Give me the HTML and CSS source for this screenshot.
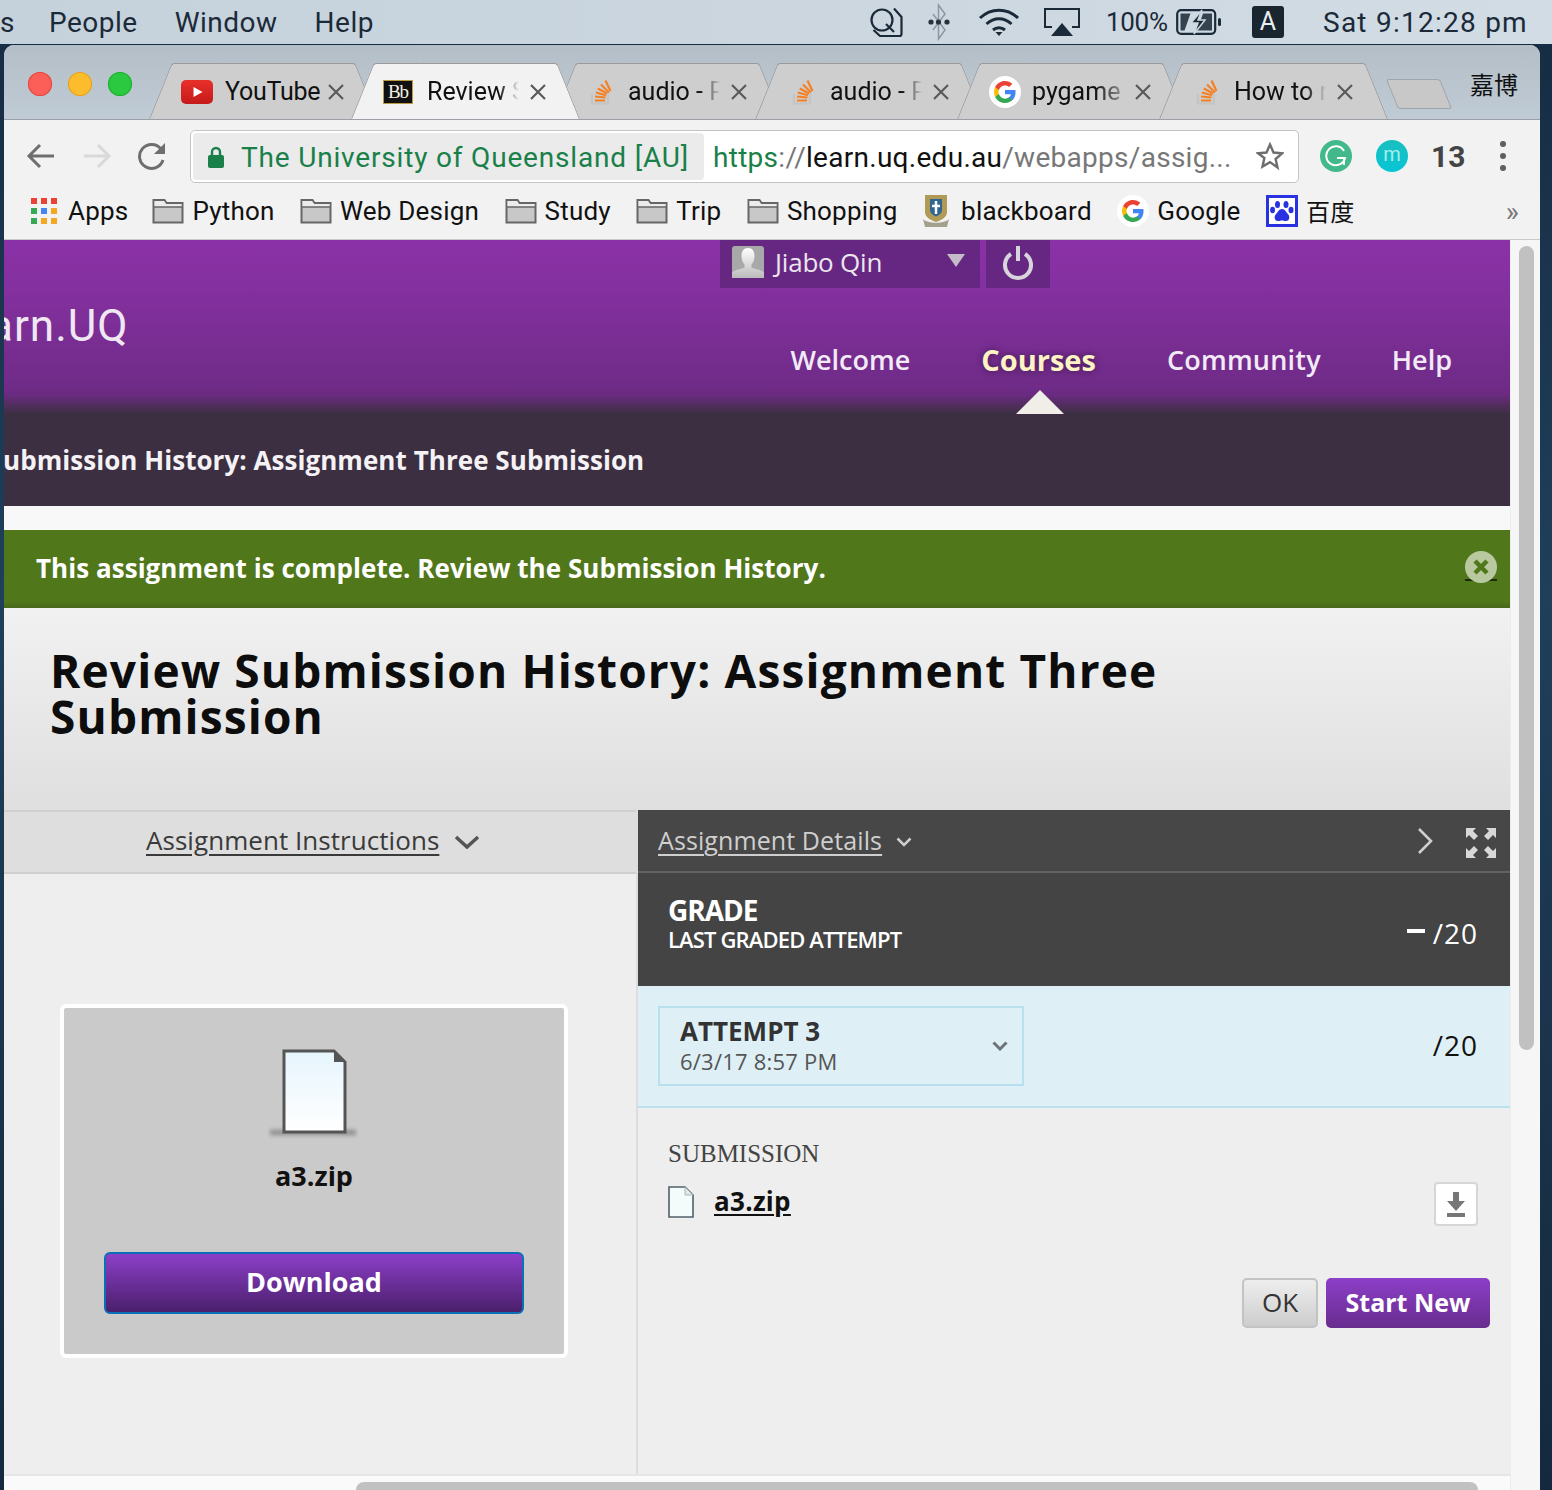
FILE: index.html
```html
<!DOCTYPE html>
<html lang="en">
<head>
<meta charset="utf-8">
<title>Review Submission History</title>
<link rel="stylesheet" href="styles.css">
</head>
<body>
<svg class="defs" width="0" height="0" aria-hidden="true">
  <symbol id="g-logo" viewBox="0 0 24 24">
    <path fill="#4285F4" d="M22.56 12.25c0-.78-.07-1.53-.2-2.25H12v4.26h5.92c-.26 1.37-1.04 2.53-2.21 3.31v2.77h3.57c2.08-1.92 3.28-4.74 3.28-8.09z"/>
    <path fill="#34A853" d="M12 23c2.97 0 5.46-.98 7.28-2.66l-3.57-2.77c-.98.66-2.23 1.06-3.71 1.06-2.86 0-5.29-1.93-6.16-4.53H2.18v2.84C3.99 20.53 7.7 23 12 23z"/>
    <path fill="#FBBC05" d="M5.84 14.09c-.22-.66-.35-1.36-.35-2.09s.13-1.43.35-2.09V7.07H2.18C1.43 8.55 1 10.22 1 12s.43 3.45 1.18 4.93l3.66-2.84z"/>
    <path fill="#EA4335" d="M12 5.38c1.62 0 3.06.56 4.21 1.64l3.15-3.15C17.45 2.09 14.97 1 12 1 7.7 1 3.99 3.47 2.18 7.07l3.66 2.84c.87-2.6 3.3-4.53 6.16-4.53z"/>
  </symbol>
  <symbol id="so" viewBox="0 0 24 26">
    <path d="M2 15v9.500h16V15" fill="none" stroke="#c4c4c4" stroke-width="2.200"/>
    <g fill="none" stroke="#f48024" stroke-width="2.200">
      <path d="M5 21.500h10"/><path d="M5 17.500l10.500 1"/><path d="M5.800 13.500l10.200 2.800"/><path d="M7.800 9.500l9.400 5"/><path d="M11 5.500l8 8"/><path d="M15.500 1.500l5 10.500"/>
    </g>
  </symbol>
  <symbol id="folder" viewBox="0 0 32 26">
    <path d="M1.500 24.500V2h11l2 3h16v19.500z" fill="#c8c8c8" stroke="#666" stroke-width="2"/>
    <path d="M2.500 3h9.500l2 3h15.500v3H2.500z" fill="#ececec"/>
    <path d="M2 9h28" stroke="#666" stroke-width="1.500"/>
  </symbol>
  <symbol id="x-mark" viewBox="0 0 16 16">
    <path d="M1 1l14 14M15 1L1 15" fill="none" stroke="#5a5a5a" stroke-width="2.200"/>
  </symbol>
</svg>

<header class="menubar">
  <div class="menu-left">
    <span class="menu-s">s</span>
    <span>People</span>
    <span>Window</span>
    <span>Help</span>
  </div>
  <div class="menu-right">
    <svg class="mi-search" width="33" height="34" viewBox="0 0 33 34" fill="none" stroke="#1b2a38" stroke-width="2.200"><circle cx="12" cy="14" r="10.500"/><path d="M16 18l8 8"/><path d="M24 2.500l7.500 8.500v17a2 2 0 0 1-2 2H10L3.500 24"/></svg>
    <svg class="mi-bt" width="22" height="38" viewBox="0 0 22 38" fill="none" stroke="#8b97a3" stroke-width="1.500"><path d="M5 11l12 16-6.500 9V2L17 11 5 27"/><circle cx="3" cy="19" r="2.600" fill="#27323c" stroke="none"/><circle cx="10.500" cy="19" r="2.600" fill="#27323c" stroke="none"/><circle cx="19" cy="19" r="2.600" fill="#27323c" stroke="none"/></svg>
    <svg class="mi-wifi" width="42" height="28" viewBox="0 0 42 28" fill="none" stroke="#1b2a38" stroke-width="3"><path d="M2 10c11-10.500 27-10.500 38 0"/><path d="M8.500 16c7.500-7 17.500-7 25 0"/><path d="M15 22c3.500-3 8.500-3 12 0"/><path d="M21 28l-3.500-4h7z" fill="#1b2a38" stroke="none"/></svg>
    <svg class="mi-air" width="36" height="30" viewBox="0 0 36 30" fill="none" stroke="#1b2a38" stroke-width="2"><path d="M8 20H1V2h34v18h-7"/><path d="M18 16l11 13H7z" fill="#1b2a38" stroke="none"/></svg>
    <span class="mi-pct">100%</span>
    <svg class="mi-batt" width="46" height="26" viewBox="0 0 46 26"><rect x="1.200" y="1.200" width="38" height="23.600" rx="4" fill="none" stroke="#1b2a38" stroke-width="2.200"/><path d="M4.500 4.500h10l-6 17h-4zM36 4.500v17H21l6-17z" fill="#35434f"/><path d="M26 1l-11 13h7l-4 11 11-14h-7z" fill="#1b2a38" stroke="#cbd7e0" stroke-width="1.500"/><rect x="42" y="9" width="3" height="8" rx="1.500" fill="#1b2a38"/></svg>
    <span class="mi-a">A</span>
    <span class="mi-clock">Sat 9:12:28 pm</span>
  </div>
</header>

<main class="window">
  <div class="tabbar">
    <div class="lights"><i class="light red"></i><i class="light amber"></i><i class="light green"></i></div>
    <div class="tabs">
      <div class="tab">
        <svg class="favicon" width="32" height="24" viewBox="0 0 32 24"><defs><linearGradient id="yt" x1="0" y1="0" x2="0" y2="1"><stop offset="0" stop-color="#e8302a"/><stop offset="1" stop-color="#c51a1a"/></linearGradient></defs><rect width="32" height="24" rx="5" fill="url(#yt)"/><path d="M12.500 7l9 5-9 5z" fill="#fff"/></svg>
        <span class="tab-title tight-title">YouTube</span>
        <svg class="tab-x" width="16" height="16"><use href="#x-mark"/></svg>
      </div>
      <div class="tab active">
        <span class="bb">Bb</span>
        <span class="tab-title fade">Review Submission</span>
        <svg class="tab-x" width="16" height="16"><use href="#x-mark"/></svg>
      </div>
      <div class="tab">
        <svg class="favicon so-icon" width="24" height="26"><use href="#so"/></svg>
        <span class="tab-title fade">audio - Pygame</span>
        <svg class="tab-x" width="16" height="16"><use href="#x-mark"/></svg>
      </div>
      <div class="tab">
        <svg class="favicon so-icon" width="24" height="26"><use href="#so"/></svg>
        <span class="tab-title fade">audio - Pygame</span>
        <svg class="tab-x" width="16" height="16"><use href="#x-mark"/></svg>
      </div>
      <div class="tab">
        <span class="g-disc tab-g"><svg width="24" height="24"><use href="#g-logo"/></svg></span>
        <span class="tab-title fade wide">pygame music</span>
        <svg class="tab-x" width="16" height="16"><use href="#x-mark"/></svg>
      </div>
      <div class="tab">
        <svg class="favicon so-icon" width="24" height="26"><use href="#so"/></svg>
        <span class="tab-title fade">How to make</span>
        <svg class="tab-x" width="16" height="16"><use href="#x-mark"/></svg>
      </div>
    </div>
    <div class="newtab"></div>
    <span class="profile">嘉博</span>
  </div>

  <div class="toolbar">
    <svg class="nav-ico first" width="30" height="28" viewBox="0 0 30 28" fill="none" stroke="#6e6e6e" stroke-width="3"><path d="M28 14H4M14 3L3 14l11 11"/></svg>
    <svg class="nav-ico" width="30" height="28" viewBox="0 0 30 28" fill="none" stroke="#d9d9d9" stroke-width="3"><path d="M2 14h24M16 3l11 11-11 11"/></svg>
    <svg class="nav-ico" width="30" height="30" viewBox="0 0 30 30" fill="none" stroke="#6e6e6e" stroke-width="3"><path d="M25 19a12 12 0 1 1-2-11"/><path d="M27 2v11H16z" fill="#6e6e6e" stroke="none"/></svg>
    <div class="omnibox">
      <div class="chip">
        <svg width="16" height="22" viewBox="0 0 16 22"><path d="M4 10V6a4 4 0 0 1 8 0v4" fill="none" stroke="#188048" stroke-width="2.400"/><rect y="9" width="16" height="13" rx="2" fill="#188048"/></svg>
        <span>The University of Queensland [AU]</span>
      </div>
      <div class="url"><span class="u-green">https</span><span class="u-gray">://</span><span class="u-host">learn.uq.edu.au</span><span class="u-gray">/webapps/assig...</span></div>
      <svg class="star" width="28" height="28" viewBox="0 0 28 28"><path d="M14 2.500l3.500 8 8.500.8-6.400 5.700 1.900 8.500L14 20.100l-7.500 4.400 1.900-8.500L2 11.300l8.500-.8z" fill="none" stroke="#6e6e6e" stroke-width="2.400"/></svg>
    </div>
    <span class="ext-g"><svg width="22" height="22" viewBox="0 0 22 22" fill="none" stroke="#fff" stroke-width="2"><path d="M19 6A9.500 9.500 0 1 0 20 13H12"/><path d="M19 20v-6"/></svg></span>
    <span class="ext-m">m</span>
    <span class="ext-n">13</span>
    <span class="kebab"><i></i><i></i><i></i></span>
  </div>

  <nav class="bookmarks">
    <span class="bm apps-bm">
      <span class="apps"><i class="r"></i><i class="r"></i><i class="r"></i><i class="g"></i><i class="b"></i><i class="o"></i><i class="g"></i><i class="o"></i><i class="o"></i></span>
      <span>Apps</span>
    </span>
    <span class="bm"><svg width="32" height="26"><use href="#folder"/></svg><span>Python</span></span>
    <span class="bm"><svg width="32" height="26"><use href="#folder"/></svg><span>Web Design</span></span>
    <span class="bm"><svg width="32" height="26"><use href="#folder"/></svg><span>Study</span></span>
    <span class="bm"><svg width="32" height="26"><use href="#folder"/></svg><span>Trip</span></span>
    <span class="bm"><svg width="32" height="26"><use href="#folder"/></svg><span>Shopping</span></span>
    <span class="bm bm-shield"><svg width="28" height="32" viewBox="0 0 28 32"><path d="M3 0h22v17c0 5-5 8-11 10C8 25 3 22 3 17z" fill="#b09a55"/><path d="M8 4h12v11c0 3-2.500 5-6 6.500C10.500 20 8 18 8 15z" fill="#2f6690"/><path d="M14 6v13M10 11h8" stroke="#fff" stroke-width="2.500"/><path d="M1 24c5 5 21 5 26 0l-2 8H3z" fill="#a3a08c"/></svg><span>blackboard</span></span>
    <span class="bm"><span class="g-disc"><svg width="24" height="24"><use href="#g-logo"/></svg></span><span>Google</span></span>
    <span class="bm"><svg width="32" height="32" viewBox="0 0 32 32"><rect x="1.500" y="1.500" width="29" height="29" fill="#fff" stroke="#2932e1" stroke-width="3"/><g fill="#2932e1"><ellipse cx="11.500" cy="9.500" rx="2.500" ry="3.500"/><ellipse cx="20" cy="9.500" rx="2.500" ry="3.500"/><ellipse cx="6.500" cy="15" rx="2.500" ry="3.300"/><ellipse cx="25" cy="15" rx="2.500" ry="3.300"/><path d="M16 14c3 0 4 3 6 5s2 7-2 7c-2 0-3-.8-4-.8s-2 .8-4 .8c-4 0-4-5-2-7s3-5 6-5z"/></g></svg><span class="cjk">百度</span></span>
    <span class="more">»</span>
  </nav>

  <div class="viewport">
    <div class="page">
      <section class="hdr">
        <div class="hdr-top">
          <div class="user">
            <svg width="32" height="32" viewBox="0 0 32 32"><defs><linearGradient id="av" x1="0" y1="0" x2="0" y2="1"><stop offset="0" stop-color="#fff"/><stop offset="1" stop-color="#bbb"/></linearGradient></defs><rect width="32" height="32" rx="3" fill="#a8a8a8"/><path d="M16 2c4.500 0 6.500 3.500 6.500 8 0 4-1.500 7-3 8.500v3c3 1.500 9.500 2 12.500 5V32H0v-5.500c3-3 9.500-3.500 12.500-5v-3c-1.500-1.500-3-4.500-3-8.500 0-4.500 2-8 6.500-8z" fill="url(#av)"/></svg>
            <span class="user-name">Jiabo Qin</span>
            <i class="user-caret"></i>
          </div>
          <div class="power">
            <svg width="32" height="36" viewBox="0 0 32 36" fill="none" stroke="#d8d4dc" stroke-width="4"><path d="M9 10a13 13 0 1 0 14 0"/><path d="M16 2v15"/></svg>
          </div>
        </div>
        <div class="brand-row">
          <div class="logo">arn.UQ</div>
          <ul class="nav">
            <li>Welcome</li>
            <li class="current">Courses</li>
            <li class="community">Community</li>
            <li>Help</li>
          </ul>
        </div>
        <div class="crumb">ubmission History: Assignment Three Submission</div>
      </section>
      <div class="strip"></div>
      <div class="alert">
        <span>This assignment is complete. Review the Submission History.</span>
        <span class="alert-x"><svg width="32" height="32" viewBox="0 0 32 32"><circle cx="16" cy="16" r="16" fill="#b8c9a0"/><path d="M10 10l12 12M22 10L10 22" stroke="#51771b" stroke-width="4.500"/></svg></span>
      </div>
      <div class="title-block">
        <h1>Review Submission History: Assignment Three Submission</h1>
      </div>
      <div class="panels">
        <section class="left">
          <div class="left-head">
            <a class="left-link">Assignment Instructions</a>
            <svg width="26" height="14" viewBox="0 0 26 14" fill="none" stroke="#555" stroke-width="3.500"><path d="M2 2l11 10L24 2"/></svg>
          </div>
          <div class="card">
            <svg class="card-file" width="90" height="90" viewBox="0 0 90 90">
              <defs>
                <linearGradient id="pg" x1="0" y1="0" x2="0" y2="1"><stop offset="0" stop-color="#e6f5fd"/><stop offset="1" stop-color="#fff"/></linearGradient>
                <filter id="bl" x="-20%" y="-200%" width="140%" height="500%"><feGaussianBlur stdDeviation="2"/></filter>
              </defs>
              <rect x="2" y="81" width="86" height="5" fill="#8a8a8a" filter="url(#bl)"/>
              <path d="M16 2h50l11 11v70H16z" fill="url(#pg)" stroke="#555" stroke-width="3"/>
              <path d="M66 2v11h11z" fill="#555"/>
            </svg>
            <div class="card-name">a3.zip</div>
            <div class="dl-btn">Download</div>
          </div>
        </section>
        <section class="right">
          <div class="right-head">
            <a class="right-link">Assignment Details</a>
            <svg class="rh-down" width="16" height="10" viewBox="0 0 16 10" fill="none" stroke="#cfcfcf" stroke-width="2.500"><path d="M1.500 1.500L8 8l6.500-6.500"/></svg>
            <svg class="rh-next" width="16" height="28" viewBox="0 0 16 28" fill="none" stroke="#cfcfcf" stroke-width="2.600"><path d="M2 2l12 12L2 26"/></svg>
            <svg class="rh-exp" width="30" height="30" viewBox="0 0 30 30" fill="#d8d8d8"><path d="M0 0h10L7 3l5 5-4 4-5-5-3 3z"/><path d="M30 0H20l3 3-5 5 4 4 5-5 3 3z"/><path d="M0 30h10l-3-3 5-5-4-4-5 5-3-3z"/><path d="M30 30H20l3-3-5-5 4-4 5 5 3-3z"/></svg>
          </div>
          <div class="grade">
            <div>
              <div class="grade-h">GRADE</div>
              <div class="grade-s">LAST GRADED ATTEMPT</div>
            </div>
            <div class="grade-v"><i class="dash"></i>/20</div>
          </div>
          <div class="attempt">
            <div class="attempt-box">
              <div class="attempt-text">
                <div class="attempt-h">ATTEMPT 3</div>
                <div class="attempt-d">6/3/17 8:57 PM</div>
              </div>
              <svg width="16" height="10" viewBox="0 0 16 10" fill="none" stroke="#6d7478" stroke-width="3"><path d="M1.500 1.500L8 8l6.500-6.500"/></svg>
            </div>
            <div class="attempt-v">/20</div>
          </div>
          <div class="sub">
            <div class="sub-h">SUBMISSION</div>
            <div class="sub-row">
              <svg width="26" height="32" viewBox="0 0 26 32"><path d="M1 1h16l8 8v22H1z" fill="#f3fbfb" stroke="#51606a" stroke-width="1.600"/><path d="M17 1v8h8" fill="#dfe8ea" stroke="#a9b4b9" stroke-width="1"/></svg>
              <a class="sub-link">a3.zip</a>
              <span class="dl-icon"><svg width="20" height="26" viewBox="0 0 20 26" fill="#777"><path d="M7 1h6v9h6l-9 10L1 10h6z"/><rect x="1" y="22" width="18" height="4"/></svg></span>
            </div>
            <div class="actions">
              <span class="btn-ok">OK</span>
              <span class="btn-new">Start New</span>
            </div>
          </div>
        </section>
      </div>
      <div class="hscroll"><div class="hthumb"></div></div>
    </div>
    <div class="vscroll"><div class="vthumb"></div></div>
  </div>
</main>
</body>
</html>
```

FILE: styles.css
```css
* { box-sizing: border-box; }
html, body { margin: 0; height: 1490px; overflow: hidden; }
body {
  width: 1552px;
  background: linear-gradient(#152c42, #1f3f5a 40%, #14293d);
  font-family: Roboto, "Liberation Sans", sans-serif;
  color: #111;
}
.defs { position: absolute; }
svg { display: block; flex: none; }
i { display: block; font-style: normal; }

/* menu bar */
.menubar {
  height: 44px;
  background: linear-gradient(90deg, #c5d2dc, #cbd6df 50%, #d1dce5);
  display: flex;
  justify-content: space-between;
  align-items: center;
  font-size: 28px;
  color: #1b2a38;
  white-space: nowrap;
}
.menu-left { display: flex; gap: 37px; letter-spacing: .5px; }
.menu-s { width: 12px; }
.menu-right { display: flex; align-items: center; padding-right: 25px; }
.mi-search { margin: 2px -1px 0 -1px; }
.mi-bt { margin-left: 26px; }
.mi-wifi { margin-left: 28px; }
.mi-air { margin-left: 24px; }
.mi-pct { margin-left: 26px; font-size: 26px; width: 60px; letter-spacing: -.3px; }
.mi-batt { margin-left: 10px; }
.mi-a {
  margin-left: 30px; width: 32px; height: 32px; border-radius: 3px;
  background: #19252f; color: #e9eef2; font-size: 25px; text-align: center; line-height: 32px;
}
.mi-clock { margin-left: 39px; width: 204px; letter-spacing: 1.25px; }

/* browser window */
.window {
  margin: 1px 0 0 4px;
  width: 1536px;
  height: 1445px;
  border-radius: 10px 10px 0 0;
  overflow: hidden;
  background: #f2f2f2;
  display: flex;
  flex-direction: column;
}
.tabbar {
  height: 75px;
  flex: none;
  background: linear-gradient(#b4bec7, #bfcbd5);
  display: flex;
  padding-left: 24px;
  border-bottom: 1px solid #9aa0a5;
}
.lights { display: flex; gap: 16px; margin-top: 27px; }
.light { width: 24px; height: 24px; border-radius: 50%; }
.light.red { background: #fc5f57; box-shadow: inset 0 0 0 1px #e2463f; }
.light.amber { background: #fdbc2e; box-shadow: inset 0 0 0 1px #dfa123; }
.light.green { background: #2ac940; box-shadow: inset 0 0 0 1px #1fae30; }
.tabs { display: flex; margin: 18px 0 0 17px; height: 56px; }
.tab {
  position: relative;
  z-index: 1;
  width: 229px;
  height: 56px;
  margin-right: -27px;
  display: flex;
  align-items: center;
  padding: 1px 0 0 32px;
  font-size: 25px;
  white-space: nowrap;
  isolation: isolate;
}
.tab:last-child { margin-right: 0; }
.tab::before, .tab::after {
  content: "";
  position: absolute;
  top: 0; bottom: 0;
  width: 60%;
  z-index: -1;
  background: #cecece;
  border-top: 1px solid #999;
}
.tab::before {
  left: 0;
  border-left: 1px solid #999;
  border-top-left-radius: 3px;
  transform-origin: bottom left;
  transform: skewX(-22deg);
}
.tab::after {
  right: 0;
  border-right: 1px solid #999;
  border-top-right-radius: 3px;
  transform-origin: bottom right;
  transform: skewX(22deg);
}
.tab.active { z-index: 2; }
.tab.active::before, .tab.active::after { background: #f2f2f2; }
.favicon { margin-right: 12px; }
.so-icon { margin-right: 14px; margin-left: 5px; }
.tab-title { width: 100px; overflow: hidden; }
.tight-title { letter-spacing: -.25px; }
.tab-title.fade {
  -webkit-mask-image: linear-gradient(90deg, #000 72%, transparent 92%);
  mask-image: linear-gradient(90deg, #000 72%, transparent 92%);
}
.tab-title.wide {
  width: 90px; margin-right: 10px;
  -webkit-mask-image: linear-gradient(90deg, #000 70%, #0006 96%);
  mask-image: linear-gradient(90deg, #000 70%, #0006 96%);
}
.tab-x { margin-left: 3px; }
.bb {
  width: 30px; height: 24px; margin-right: 14px; margin-left: 0;
  background: #111; border: 1px solid #b89a45;
  color: #f4f1e2; font: 19px/22px "Liberation Serif", serif; text-align: center; letter-spacing: -1px;
}
.g-disc {
  width: 32px; height: 32px; border-radius: 50%; background: #fff;
  display: flex; align-items: center; justify-content: center; flex: none;
}
.tab-g { margin-right: 11px; margin-left: 0; }
.newtab {
  width: 54px; height: 30px; margin: 34px 0 0 4px;
  background: #c8c8c8; border: 1px solid #9fa5a9; border-radius: 3px;
  transform: skewX(22deg);
}
.profile {
  margin: 23px 0 0 24px;
  font: 24px/32px "Noto Sans CJK SC", sans-serif;
  white-space: nowrap;
}

/* toolbar */
.toolbar {
  height: 63px;
  flex: none;
  display: flex;
  align-items: center;
  padding: 9px 0 0 22px;
}
.nav-ico { margin-right: 26px; }
.omnibox {
  width: 1109px;
  height: 53px;
  margin-left: -4px;
  background: #fff;
  border: 1px solid #c4c4c4;
  border-radius: 5px;
  display: flex;
  align-items: center;
  padding: 2px;
  font-size: 28px;
  white-space: nowrap;
}
.chip {
  width: 511px;
  height: 100%;
  background: #ebebeb;
  border-radius: 4px;
  display: flex;
  align-items: center;
  gap: 17px;
  padding: 2px 0 0 15px;
  color: #188048;
  letter-spacing: .82px;
}
.url { margin-left: 9px; padding-top: 2px; width: 543px; color: #777; letter-spacing: .28px; }
.u-green { color: #188048; }
.u-gray { color: #777; }
.u-host { color: #111; }
.ext-g {
  width: 32px; height: 32px; margin-left: 21px; border-radius: 50%;
  background: #42b98a; display: flex; align-items: center; justify-content: center;
}
.ext-m {
  width: 32px; height: 32px; margin-left: 24px; border-radius: 50%;
  background: linear-gradient(#19bfc0, #07c5d6); color: #a6eee9;
  font-size: 20px; line-height: 28px; text-align: center;
}
.ext-n { margin-left: 23px; width: 34px; font-size: 30px; font-weight: 700; color: #444; }
.kebab { margin-left: 35px; display: flex; flex-direction: column; gap: 6px; }
.kebab i { width: 6px; height: 6px; border-radius: 50%; background: #5f5f5f; }

/* bookmarks */
.bookmarks {
  height: 57px;
  flex: none;
  display: flex;
  align-items: center;
  padding: 0 21px 0 27px;
  border-bottom: 1px solid #c9c9c9;
  font-size: 26px;
  letter-spacing: .2px;
  white-space: nowrap;
  gap: 25.5px;
}
.bm { display: flex; align-items: center; gap: 8px; }
.apps-bm { gap: 11px; margin-right: -1.500px; }
.bm-shield { gap: 11px; margin-left: -1px; }
.apps { display: grid; grid-template-columns: repeat(3, 6px); grid-auto-rows: 6px; gap: 4px; }
.apps .r { background: #ea4335; }
.apps .g { background: #34a853; }
.apps .b { background: #4285f4; }
.apps .o { background: #f5a623; }
.cjk { font-family: "Noto Sans CJK SC", sans-serif; font-size: 24px; margin-top: -2px; }
.more { margin-left: auto; color: #777; font-size: 28px; }

/* page */
.viewport { flex: 1; min-height: 0; display: flex; }
.page { width: 1506px; display: flex; flex-direction: column; font-family: "Open Sans", "DejaVu Sans", sans-serif; }
.vscroll { flex: 1; background: #f6f6f6; padding: 6px 6px 0 8px; border-left: 1px solid #ececec; }
.vthumb { height: 804px; background: #c1c1c1; border-radius: 8px; }

.hdr {
  height: 266px;
  flex: none;
  overflow: hidden;
  background: linear-gradient(#8a31a7 0, #84309f 50px, #6f2b87 148px, #6a2b80 155px, #3c2f41 174px);
  display: flex;
  flex-direction: column;
}
.hdr-top { display: flex; gap: 6px; padding-left: 716px; height: 48px; flex: none; }
.user {
  width: 260px; height: 48px; background: #662782;
  display: flex; align-items: center; padding: 0 12px 4px;
  color: #ece6ef; font-size: 26px;
}
.user-name { margin-left: 11px; letter-spacing: -.2px; }
.user-caret {
  margin: 0 3px 4px auto;
  width: 0; height: 0;
  border-left: 9px solid transparent; border-right: 9px solid transparent;
  border-top: 13px solid #c4bcc8;
}
.power { width: 64px; height: 48px; padding-bottom: 4px; background: #662782; display: flex; align-items: center; justify-content: center; }
.brand-row { height: 102px; flex: none; display: flex; justify-content: space-between; }
.logo { font: 400 44px/60px Roboto, sans-serif; letter-spacing: 1px; margin: 8px 0 0 -15px; color: #efe8f2; }
.nav { list-style: none; margin: 0; padding: 40px 58px 0 0; display: flex; gap: 71px; font-size: 27px; line-height: 64px; height: 102px; color: #f2eaf6; font-weight: 600; }
.nav li { position: relative; }
.nav .community { letter-spacing: .2px; }
.nav .current { color: #fff2c4; font-size: 29px; font-weight: 700; text-shadow: 0 0 6px #3c1a4d; }
.nav .current::after {
  content: "";
  position: absolute;
  left: 50%; top: 62px;
  margin-left: -23px;
  border-left: 24px solid transparent; border-right: 24px solid transparent;
  border-bottom: 24px solid #f0eee6;
}
.crumb { margin: 52px 0 0 -1px; font-size: 26px; line-height: 36px; font-weight: 700; color: #f5f2f6; white-space: nowrap; letter-spacing: .05px; }
.strip { height: 24px; flex: none; background: #f8f8f8; }
.alert {
  height: 78px; flex: none;
  background: linear-gradient(#51771b 92%, #47681a);
  display: flex; align-items: center; justify-content: space-between;
  padding: 0 13px 2px 32px;
  color: #fff; font-size: 26px; font-weight: 700; letter-spacing: .04px;
}
.alert-x { display: block; border-bottom: 2px solid #1c2a0a; height: 30px; margin-top: -4px; }
.title-block {
  height: 202px; flex: none;
  background: linear-gradient(#f1f1f1, #dfdfdf);
  padding: 39px 0 0 46px;
}
h1 { margin: 0; width: 1200px; font-size: 46px; line-height: 46px; font-weight: 700; color: #0d0d0d; letter-spacing: 1.16px; }
.panels { flex: 1; min-height: 0; display: flex; background: #eee; }
.left { width: 634px; flex: none; border-right: 2px solid #ddd; }
.left-head {
  height: 64px; background: #dedede;
  border-top: 2px solid #cfcfcf; border-bottom: 2px solid #cfcfcf;
  display: flex; align-items: center; gap: 15px; padding: 0 0 5px 142px;
}
.left-link { font-size: 26px; color: #3a3a3a; text-decoration: underline 2px; text-underline-offset: 4px; letter-spacing: .05px; }
.left-head svg { margin-top: 5px; }
.card {
  margin: 130px 0 0 56px;
  width: 508px; height: 354px;
  background: #cacaca;
  border: 4px solid #fff;
  border-radius: 6px;
  padding-top: 41px;
  display: flex; flex-direction: column; align-items: center;
}
.card-file { margin-left: -3px; }
.card-name { margin-top: 19px; font-size: 27px; line-height: 36px; font-weight: 700; color: #111; }
.dl-btn {
  margin-top: 58px; width: 420px; height: 62px;
  background: linear-gradient(#8c3fc8, #4a1f6b);
  border: 2px solid #0b6fb8; border-radius: 6px;
  color: #fff; font-size: 27px; font-weight: 700; text-align: center; line-height: 56px;
}
.right { flex: 1; display: flex; flex-direction: column; }
.right-head {
  height: 63px; flex: none; background: #474747;
  border-bottom: 2px solid #636363;
  display: flex; align-items: center; padding: 0 14px 1px 20px; gap: 14px;
}
.right-link { font-size: 25px; letter-spacing: .1px; color: #cfcfcf; text-decoration: underline 2px; text-underline-offset: 4px; }
.rh-down { margin-top: 4px; }
.rh-next { margin-left: auto; margin-right: 19px; margin-top: 2px; }
.rh-exp { margin-top: 6px; }
.grade {
  height: 113px; flex: none; background: #444; color: #fff;
  display: flex; justify-content: space-between; align-items: flex-start;
  padding: 17px 32px 0 30px;
}
.grade-h { font-size: 28px; line-height: 40px; font-weight: 700; letter-spacing: -1px; }
.grade-s { font-size: 22px; line-height: 20px; letter-spacing: -.85px; font-weight: 600; margin-top: -1px; }
.grade-v { display: flex; align-items: center; gap: 8px; font-size: 28px; line-height: 40px; margin-top: 23px; letter-spacing: 1px; }
.dash { width: 18px; height: 4px; background: #fff; margin-bottom: 4px; }
.attempt {
  height: 122px; flex: none; background: #def0f5;
  border-bottom: 2px solid #bde0ee;
  display: flex; justify-content: space-between; align-items: center;
  padding: 0 32px 0 20px;
}
.attempt-box {
  width: 366px; height: 80px;
  border: 2px solid #b8e0ef;
  display: flex; align-items: center; justify-content: space-between;
  padding: 0 14px 0 20px;
}
.attempt-text { margin-top: -2px; }
.attempt-h { font-size: 26px; line-height: 32px; font-weight: 700; color: #333; }
.attempt-d { font-size: 22px; line-height: 28px; color: #555; letter-spacing: .22px; }
.attempt-v { font-size: 28px; color: #111; letter-spacing: 1px; margin-top: -2px; }
.sub { flex: 1; padding: 28px 32px 0 30px; }
.sub-h { font: 25px/36px "Liberation Serif", serif; color: #444; }
.sub-row { display: flex; align-items: center; height: 44px; margin-top: 10px; }
.sub-row > svg { margin: -4px 20px 0 0; }
.sub-link { font-size: 26px; letter-spacing: .3px; font-weight: 700; color: #111; text-decoration: underline; text-underline-offset: 3px; margin-top: -6px; }
.dl-icon {
  margin-left: auto; width: 44px; height: 44px; background: #fff;
  border: 2px solid #d6d6d6; border-radius: 4px;
  display: flex; align-items: center; justify-content: center;
}
.actions { display: flex; justify-content: flex-end; gap: 8px; margin: 52px -12px 0 0; }
.btn-ok {
  width: 76px; height: 50px; background: linear-gradient(#eee, #cdcdcd);
  border: 2px solid #c3c3c3; border-radius: 5px;
  font-size: 26px; line-height: 44px; text-align: center; color: #333;
}
.btn-new {
  width: 164px; height: 50px; background: linear-gradient(#8c3fc8, #682c8e);
  border-radius: 5px; color: #fff;
  font-size: 25px; line-height: 48px; font-weight: 700; text-align: center;
}
.hscroll { height: 16px; flex: none; background: #fafafa; padding: 6px 0 0 352px; overflow: hidden; border-top: 2px solid #e6e6e6; }
.hthumb { width: 1122px; height: 16px; background: #c1c1c1; border-radius: 8px; }
```
